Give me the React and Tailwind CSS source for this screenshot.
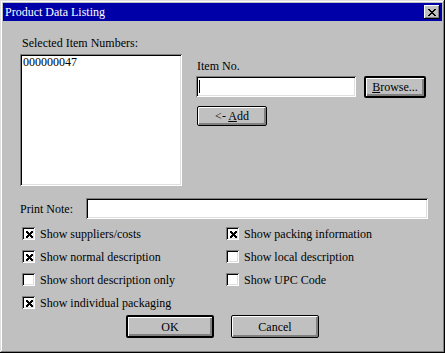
import React from "react";

const font = { fontFamily: '"Liberation Serif", "Times New Roman", serif' };

const sunken =
  "bg-white shadow-[inset_1px_1px_#808080,inset_-1px_-1px_#ffffff,inset_2px_2px_#000000,inset_-2px_-2px_#dfdfdf]";

function Btn({ children, def, className }) {
  return (
    <div
      className={
        "flex items-center justify-center bg-[#c0c0c0] rounded-[2px] text-[12px] leading-[14px] text-black " +
        (def
          ? "border-2 border-black shadow-[inset_1px_1px_#ffffff,inset_-1px_-1px_#808080,inset_-2px_-2px_#808080] "
          : "border border-black shadow-[inset_1px_1px_#ffffff,inset_-1px_-1px_#808080,inset_-2px_-2px_#808080] ") +
        className
      }
    >
      {children}
    </div>
  );
}

function Check({ checked, label }) {
  return (
    <div className="flex items-center h-[23px]">
      <div className="w-[13px] h-[13px] ml-[2px] bg-white flex items-center justify-center shadow-[inset_1px_1px_#808080,inset_-1px_-1px_#ffffff,inset_2px_2px_#000000,inset_-2px_-2px_#dfdfdf]">
        {checked && (
          <svg width="7" height="7" viewBox="0 0 7 7" shapeRendering="crispEdges" className="ml-[1px] mt-[1px]">
            <path d="M0 0h2v1h-2zM5 0h2v1h-2zM0 1h3v1h-3zM4 1h3v1h-3zM1 2h5v1h-5zM2 3h3v1h-3zM1 4h5v1h-5zM0 5h3v1h-3zM4 5h3v1h-3zM0 6h2v1h-2zM5 6h2v1h-2z" fill="#000" />
          </svg>
        )}
      </div>
      <span className="ml-[5px] text-[12px] leading-[14px] text-black">{label}</span>
    </div>
  );
}

export default function App() {
  return (
    <div
      style={font}
      className="w-[445px] h-[353px] bg-[#c0c0c0] p-[3px] flex flex-col shadow-[inset_-1px_-1px_#000000,inset_1px_1px_#dfdfdf,inset_-2px_-2px_#808080,inset_2px_2px_#ffffff]"
    >
      <div className="h-[18px] bg-[#0000a8] flex items-center justify-between pl-[2px] pr-[2px]">
        <span className="text-white text-[12px] leading-[14px]">Product Data Listing</span>
        <div className="w-[16px] h-[14px] bg-[#c0c0c0] flex items-center justify-center shadow-[inset_-1px_-1px_#000000,inset_1px_1px_#ffffff,inset_-2px_-2px_#808080]">
          <svg width="8" height="7" viewBox="0 0 8 7" shapeRendering="crispEdges">
            <path d="M0 0h2v1h-2zM6 0h2v1h-2zM1 1h2v1h-2zM5 1h2v1h-2zM2 2h4v1h-4zM3 3h2v1h-2zM2 4h4v1h-4zM1 5h2v1h-2zM5 5h2v1h-2zM0 6h2v1h-2zM6 6h2v1h-2z" fill="#000" />
          </svg>
        </div>
      </div>

      <div className="flex flex-col pl-[17px]">
        <div className="flex mt-[15px]">
          <div className="flex flex-col">
            <span className="text-[12px] leading-[14px] ml-[2px] text-black">Selected Item Numbers:</span>
            <div className={"w-[162px] h-[132px] mt-[4px] pl-[3px] pt-[2px] " + sunken}>
              <span className="text-[12px] leading-[12px] text-black block">000000047</span>
            </div>
          </div>
          <div className="flex flex-col ml-[14px] mt-[23px]">
            <span className="text-[12px] leading-[14px] ml-[1px] text-black">Item No.</span>
            <div className="flex mt-[3px]">
              <div className={"w-[160px] h-[21px] flex items-center pl-[3px] " + sunken}>
                <div className="w-[1px] h-[13px] bg-black" />
              </div>
              <Btn def className="w-[62px] h-[22px] ml-[8px]">
                <span><span className="underline">B</span>rowse...</span>
              </Btn>
            </div>
            <Btn className="w-[70px] h-[20px] mt-[8px] ml-[1px]">
              <span>&lt;- <span className="underline">A</span>dd</span>
            </Btn>
          </div>
        </div>

        <div className="flex items-center mt-[12px]">
          <span className="text-[12px] leading-[14px] text-black w-[66px]">Print Note:</span>
          <div className={"w-[342px] h-[21px] " + sunken} />
        </div>

        <div className="flex mt-[3px]">
          <div className="flex flex-col w-[204px]">
            <Check checked label="Show suppliers/costs" />
            <Check checked label="Show normal description" />
            <Check label="Show short description only" />
            <Check checked label="Show individual packaging" />
          </div>
          <div className="flex flex-col">
            <Check checked label="Show packing information" />
            <Check label="Show local description" />
            <Check label="Show UPC Code" />
          </div>
        </div>

        <div className="flex ml-[106px] mt-[1px]">
          <Btn def className="w-[88px] h-[23px]">OK</Btn>
          <Btn className="w-[88px] h-[23px] ml-[17px]">Cancel</Btn>
        </div>
      </div>
    </div>
  );
}
